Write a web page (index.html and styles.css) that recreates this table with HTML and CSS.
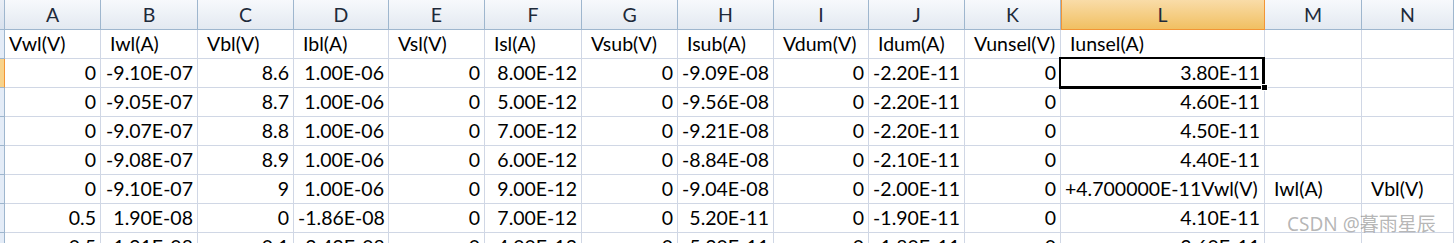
FILE: index.html
```
<!DOCTYPE html>
<html lang="zh">
<head>
    <meta charset="UTF-8">
    <meta name="viewport" content="width=device-width, initial-scale=1.0">
    <title>Sheet1</title>
    <link rel="stylesheet" href="styles.css">
</head>
<body>
    <div class="sheet">
        <!-- letras de columna -->
        <div class="ch corner"></div>
        <div class="ch">A</div>
        <div class="ch">B</div>
        <div class="ch">C</div>
        <div class="ch">D</div>
        <div class="ch">E</div>
        <div class="ch">F</div>
        <div class="ch">G</div>
        <div class="ch">H</div>
        <div class="ch">I</div>
        <div class="ch">J</div>
        <div class="ch">K</div>
        <div class="ch sel">L</div>
        <div class="ch">M</div>
        <div class="ch">N</div>

        <!-- fila 1 -->
        <div class="rh"></div>
        <div class="c">Vwl(V)</div>
        <div class="c sp">Iwl(A)</div>
        <div class="c sp">Vbl(V)</div>
        <div class="c sp">Ibl(A)</div>
        <div class="c sp">Vsl(V)</div>
        <div class="c sp">Isl(A)</div>
        <div class="c sp">Vsub(V)</div>
        <div class="c sp">Isub(A)</div>
        <div class="c sp">Vdum(V)</div>
        <div class="c sp">Idum(A)</div>
        <div class="c sp">Vunsel(V)</div>
        <div class="c sp">Iunsel(A)</div>
        <div class="c"></div>
        <div class="c"></div>

        <!-- fila 2 -->
        <div class="rh hl"></div>
        <div class="c n">0</div>
        <div class="c n">-9.10E-07</div>
        <div class="c n">8.6</div>
        <div class="c n">1.00E-06</div>
        <div class="c n">0</div>
        <div class="c n">8.00E-12</div>
        <div class="c n">0</div>
        <div class="c n">-9.09E-08</div>
        <div class="c n">0</div>
        <div class="c n">-2.20E-11</div>
        <div class="c n">0</div>
        <div class="c n active">3.80E-11<span class="handle"></span></div>
        <div class="c"></div>
        <div class="c"></div>

        <!-- fila 3 -->
        <div class="rh"></div>
        <div class="c n">0</div>
        <div class="c n">-9.05E-07</div>
        <div class="c n">8.7</div>
        <div class="c n">1.00E-06</div>
        <div class="c n">0</div>
        <div class="c n">5.00E-12</div>
        <div class="c n">0</div>
        <div class="c n">-9.56E-08</div>
        <div class="c n">0</div>
        <div class="c n">-2.20E-11</div>
        <div class="c n">0</div>
        <div class="c n">4.60E-11</div>
        <div class="c"></div>
        <div class="c"></div>

        <!-- fila 4 -->
        <div class="rh"></div>
        <div class="c n">0</div>
        <div class="c n">-9.07E-07</div>
        <div class="c n">8.8</div>
        <div class="c n">1.00E-06</div>
        <div class="c n">0</div>
        <div class="c n">7.00E-12</div>
        <div class="c n">0</div>
        <div class="c n">-9.21E-08</div>
        <div class="c n">0</div>
        <div class="c n">-2.20E-11</div>
        <div class="c n">0</div>
        <div class="c n">4.50E-11</div>
        <div class="c"></div>
        <div class="c"></div>

        <!-- fila 5 -->
        <div class="rh"></div>
        <div class="c n">0</div>
        <div class="c n">-9.08E-07</div>
        <div class="c n">8.9</div>
        <div class="c n">1.00E-06</div>
        <div class="c n">0</div>
        <div class="c n">6.00E-12</div>
        <div class="c n">0</div>
        <div class="c n">-8.84E-08</div>
        <div class="c n">0</div>
        <div class="c n">-2.10E-11</div>
        <div class="c n">0</div>
        <div class="c n">4.40E-11</div>
        <div class="c"></div>
        <div class="c"></div>

        <!-- fila 6 -->
        <div class="rh"></div>
        <div class="c n">0</div>
        <div class="c n">-9.10E-07</div>
        <div class="c n">9</div>
        <div class="c n">1.00E-06</div>
        <div class="c n">0</div>
        <div class="c n">9.00E-12</div>
        <div class="c n">0</div>
        <div class="c n">-9.04E-08</div>
        <div class="c n">0</div>
        <div class="c n">-2.00E-11</div>
        <div class="c n">0</div>
        <div class="c pl">+4.700000E-11Vwl(V)</div>
        <div class="c sp">Iwl(A)</div>
        <div class="c sp">Vbl(V)</div>

        <!-- fila 7 -->
        <div class="rh"></div>
        <div class="c n">0.5</div>
        <div class="c n">1.90E-08</div>
        <div class="c n">0</div>
        <div class="c n">-1.86E-08</div>
        <div class="c n">0</div>
        <div class="c n">7.00E-12</div>
        <div class="c n">0</div>
        <div class="c n">5.20E-11</div>
        <div class="c n">0</div>
        <div class="c n">-1.90E-11</div>
        <div class="c n">0</div>
        <div class="c n">4.10E-11</div>
        <div class="c"></div>
        <div class="c"></div>

        <!-- fila 8 -->
        <div class="rh"></div>
        <div class="c n">0.5</div>
        <div class="c n">1.91E-08</div>
        <div class="c n">0.1</div>
        <div class="c n">-2.49E-08</div>
        <div class="c n">0</div>
        <div class="c n">4.00E-12</div>
        <div class="c n">0</div>
        <div class="c n">5.30E-11</div>
        <div class="c n">0</div>
        <div class="c n">-1.80E-11</div>
        <div class="c n">0</div>
        <div class="c n">3.60E-11</div>
        <div class="c"></div>
        <div class="c"></div>
    </div>

    <div class="watermark">CSDN @暮雨星辰</div>
</body>
</html>
```

FILE: styles.css
```
body {
    margin: 0;
    padding: 0;
    background-color: #FFFFFF;
    font-family: Lato, "Open Sans", sans-serif;
    color: #000000;
    position: relative;
    height: 243px;
    overflow: hidden;
}

.sheet {
    display: grid;
    grid-template-columns: 5px 96px 97px 96px 95px 96px 97px 96px 96px 95px 96px 96px 204px 97px 1fr;
    grid-template-rows: 30px;
    grid-auto-rows: 29px;
    font-size: 19.5px;
}

/* celdas normales */
.c {
    box-sizing: border-box;
    border-right: 1px solid #d0d7e5;
    border-bottom: 1px solid #d0d7e5;
    padding: 0 4px;
    line-height: 28px;
    white-space: nowrap;
    overflow: visible;
}

.n {
    text-align: right;
}

.sp {
    padding-left: 9px;
}

.pl {
    padding-left: 4px;
}

/* cabecera de columnas */
.ch {
    box-sizing: border-box;
    border-right: 1px solid #9eb6ce;
    border-bottom: 1px solid #9eb6ce;
    background: linear-gradient(#f7f9fc, #e3e9f1);
    color: #1e2a3a;
    text-align: center;
    line-height: 30px;
}

.ch.sel {
    background: linear-gradient(#f9dca8, #f1c062);
    border-right-color: #f29536;
    border-bottom-color: #f29536;
    box-shadow: inset 1px 0 0 #f29536;
}

.corner {
    background: linear-gradient(#e9eef6, #d9e2ee);
}

/* cabecera de filas (solo se ve el borde) */
.rh {
    box-sizing: border-box;
    background-color: #e4ecf7;
    border-right: 1px solid #9eb6ce;
    border-bottom: 1px solid #9eb6ce;
}

.rh.hl {
    background-color: #f8d38b;
    border-right-color: #f29536;
}

/* celda activa */
.active {
    position: relative;
}

.active::after {
    content: "";
    position: absolute;
    left: -2px;
    top: -2px;
    right: -1px;
    bottom: -2px;
    border: 3px solid #000000;
    border-width: 2px 3px 3px 2px;
    pointer-events: none;
}

.handle {
    position: absolute;
    right: -4px;
    bottom: -4px;
    width: 5px;
    height: 5px;
    background-color: #000000;
    border: 1px solid #FFFFFF;
    z-index: 2;
}

.watermark {
    position: absolute;
    left: 1287px;
    top: 209px;
    font-family: "Noto Sans", "Noto Sans CJK SC", sans-serif;
    font-size: 19px;
    color: rgba(120, 120, 120, 0.55);
    white-space: nowrap;
}
```
